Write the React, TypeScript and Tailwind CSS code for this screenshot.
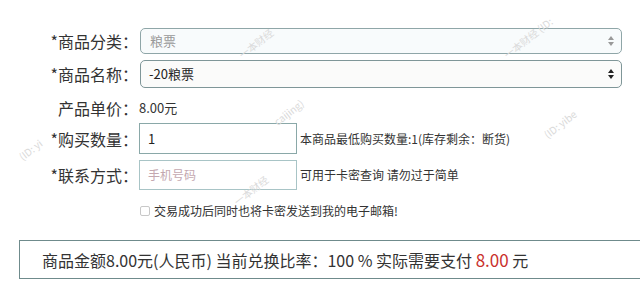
import React from "react";

const font = { fontFamily: '"Noto Sans CJK SC", "Noto Sans", sans-serif' };

function Arrows({ dark }: { dark?: boolean }) {
  const c = dark ? "#222" : "#999";
  return (
    <svg width="8" height="12" viewBox="0 0 8 12" className="shrink-0">
      <path d="M4 1 L7 5 L1 5 Z" fill={c} />
      <path d="M4 11 L7 7 L1 7 Z" fill={c} />
    </svg>
  );
}

function Label({ children }: { children: React.ReactNode }) {
  return (
    <div className="w-[139px] shrink-0 text-right pr-[1px] text-[16px] text-[#333] leading-none">
      {children}
    </div>
  );
}

function Watermark({ x, y, text }: { x: number; y: number; text: string }) {
  return (
    <div
      className="absolute whitespace-nowrap text-[10px] text-[#dadada] origin-left pointer-events-none"
      style={{ left: x, top: y, transform: "rotate(-38deg)" }}
    >
      {text}
    </div>
  );
}

export default function App() {
  return (
    <div className="relative w-[640px] h-[287px] bg-white overflow-hidden" style={font}>
      <div className="pt-[28px]">
        <div className="flex items-center h-[26px]">
          <Label>*商品分类：</Label>
          <div className="ml-[1px] w-[482px] h-[26px] rounded-[5px] border border-[#8fa6a8] bg-[#f8fbfc] flex items-center justify-between pl-[9px] pr-[6px]">
            <span className="text-[13px] text-[#999]">粮票</span>
            <Arrows />
          </div>
        </div>
        <div className="flex items-center h-[28px] mt-[6px]">
          <Label>*商品名称：</Label>
          <div className="ml-[1px] w-[482px] h-[28px] rounded-[5px] border border-[#7f9698] bg-[#fbfbfa] flex items-center justify-between pl-[8px] pr-[6px]">
            <span className="text-[13px] text-[#222]">-20粮票</span>
            <Arrows dark />
          </div>
        </div>
        <div className="flex items-center h-[20px] mt-[10px]">
          <Label>产品单价：</Label>
          <span className="text-[13px] text-[#333]">8.00元</span>
        </div>
        <div className="flex items-center h-[31px] mt-[5px]">
          <Label>*购买数量：</Label>
          <div className="w-[158px] h-[31px] border border-[#8aa8a8] bg-white flex items-center pl-[8px]">
            <span className="text-[13px] text-[#222]">1</span>
          </div>
          <span className="ml-[3px] text-[12px] text-[#333]">本商品最低购买数量:1(库存剩余：断货)</span>
        </div>
        <div className="flex items-center h-[30px] mt-[6px]">
          <Label>*联系方式：</Label>
          <div className="w-[158px] h-[30px] border border-[#a8c4c6] bg-white flex items-center pl-[8px]">
            <span className="text-[12px] text-[#c4a8b0]">手机号码</span>
          </div>
          <span className="ml-[3px] text-[12px] text-[#333]">可用于卡密查询 请勿过于简单</span>
        </div>
        <div className="flex items-center h-[16px] mt-[13px] pl-[140px]">
          <div className="w-[10px] h-[10px] border border-[#c8c8c8] rounded-[2px] bg-white" />
          <span className="ml-[4px] text-[12px] text-[#333]">交易成功后同时也将卡密发送到我的电子邮箱!</span>
        </div>
        <div className="ml-[19px] mt-[21px] w-[640px] h-[39px] border border-[#6f8b8c] bg-white flex items-center pl-[22px]">
          <span className="text-[16px] text-[#333]">
            商品金额8.00元(人民币) 当前兑换比率：100 % 实际需要支付{" "}
            <span className="text-[#c9302c] text-[17px]">8.00</span> 元
          </span>
        </div>
      </div>
      <Watermark x={240} y={48} text="一本财经" />
      <Watermark x={505} y={48} text="一本财经 (ID:" />
      <Watermark x={20} y={150} text="(ID: yi" />
      <Watermark x={235} y={195} text="一本财经" />
      <Watermark x={545} y={128} text="(ID: yibe" />
      <Watermark x={275} y={115} text="caijing)" />
    </div>
  );
}
